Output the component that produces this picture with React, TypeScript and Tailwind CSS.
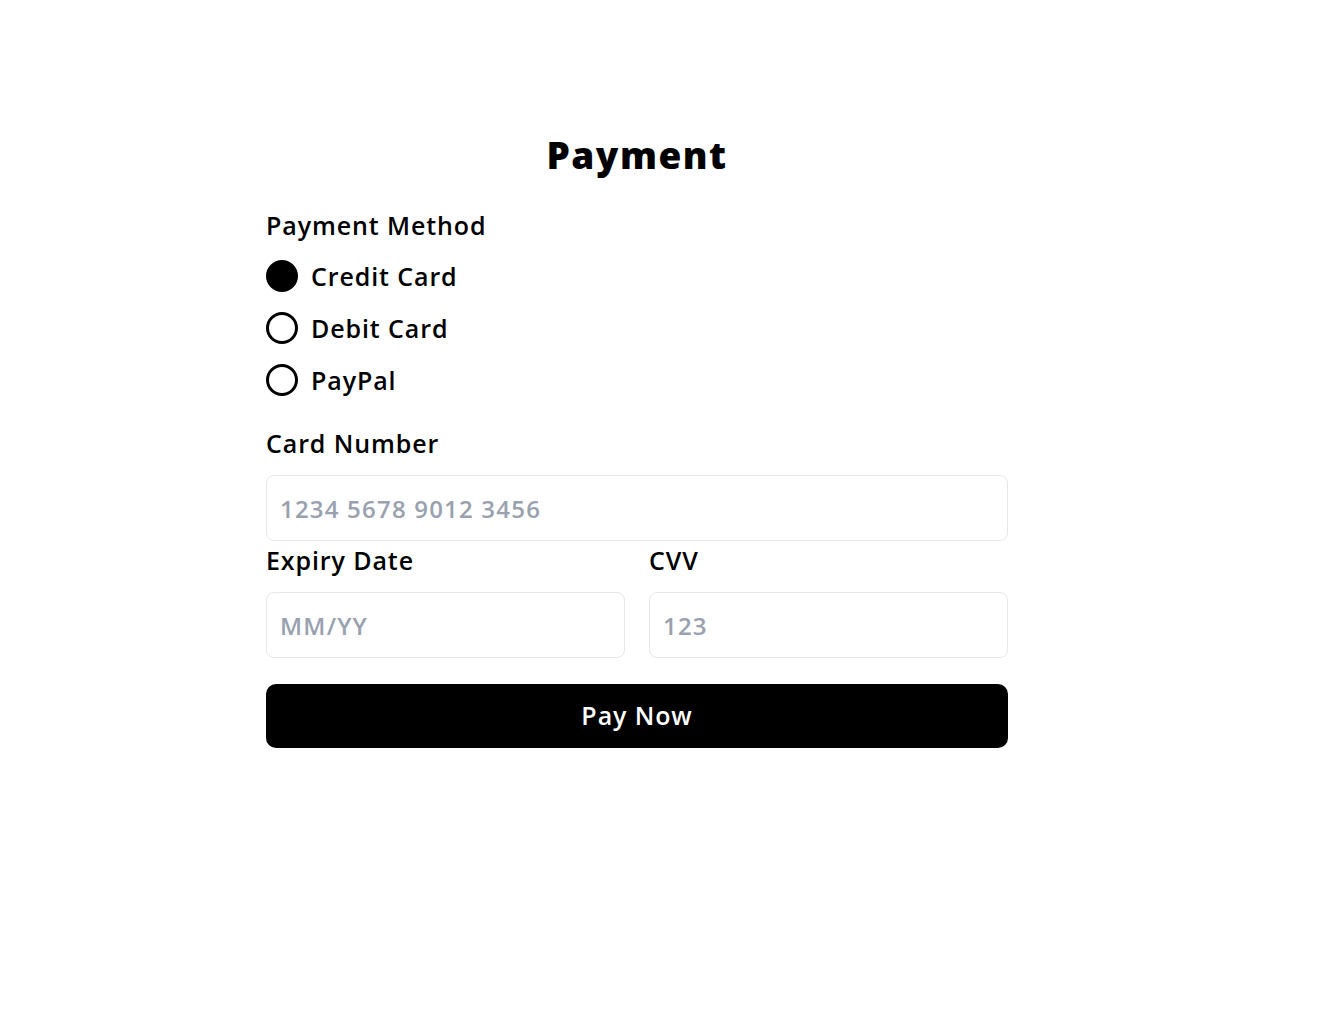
import React from "react";

const font = { fontFamily: '"Open Sans", "Noto Sans", sans-serif' };

const inputCls =
  "mt-4 box-border block h-[66px] w-full rounded-lg border border-gray-200 px-[13px] text-[24px] font-semibold tracking-[1.2px] outline-none placeholder:text-gray-400";

const labelCls = "text-[25px] font-semibold leading-8 tracking-[0.9px]";

function Radio({ label, checked }: { label: string; checked?: boolean }) {
  return (
    <label className="flex h-8 items-center gap-[13px]">
      <span
        className={
          "box-border h-8 w-8 rounded-full border-[3px] border-black " +
          (checked ? "bg-black" : "bg-white")
        }
      />
      <span className={labelCls + " text-black"}>{label}</span>
    </label>
  );
}

export default function App() {
  return (
    <div className="min-h-[1028px] w-full bg-white text-black" style={font}>
      <div className="w-[742px] ml-[266px] pt-[135px]">
        <h1 className="text-center text-[37px] font-extrabold leading-10 tracking-[1.5px]">Payment</h1>
        <div className={"mt-[34px] " + labelCls}>Payment Method</div>
        <div className="mt-[19px] flex flex-col gap-5">
          <Radio label="Credit Card" checked />
          <Radio label="Debit Card" />
          <Radio label="PayPal" />
        </div>
        <div className={"mt-[31px] " + labelCls}>Card Number</div>
        <input className={inputCls} placeholder="1234 5678 9012 3456" style={font} />
        <div className="mt-[3px] grid grid-cols-2 gap-6">
          <div>
            <div className={labelCls}>Expiry Date</div>
            <input className={inputCls} placeholder="MM/YY" style={font} />
          </div>
          <div>
            <div className={labelCls}>CVV</div>
            <input className={inputCls} placeholder="123" style={font} />
          </div>
        </div>
        <button
          className="mt-[26px] block h-16 w-full rounded-[10px] bg-black text-[25px] font-semibold tracking-[0.9px] text-white"
          style={font}
        >
          Pay Now
        </button>
      </div>
    </div>
  );
}
